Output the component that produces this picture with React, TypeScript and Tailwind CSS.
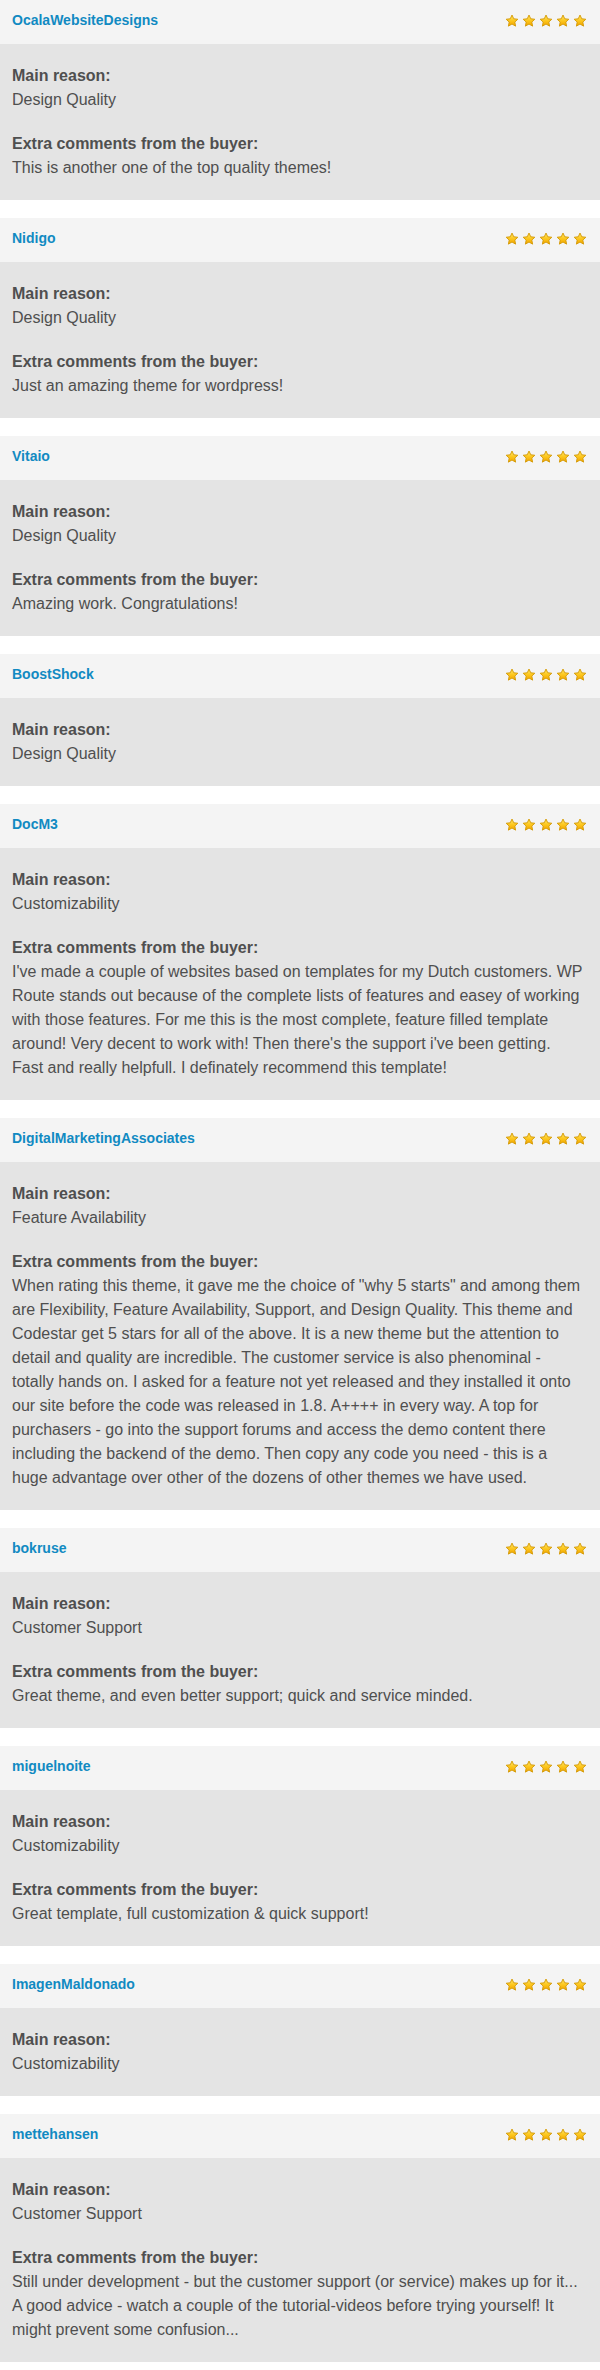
import React from "react";

type Review = { name: string; reason: string; comment?: string[] };

const reviews: Review[] = [
  { name: "OcalaWebsiteDesigns", reason: "Design Quality", comment: ["This is another one of the top quality themes!"] },
  { name: "Nidigo", reason: "Design Quality", comment: ["Just an amazing theme for wordpress!"] },
  { name: "Vitaio", reason: "Design Quality", comment: ["Amazing work. Congratulations!"] },
  { name: "BoostShock", reason: "Design Quality" },
  {
    name: "DocM3",
    reason: "Customizability",
    comment: [
      "I've made a couple of websites based on templates for my Dutch customers. WP",
      "Route stands out because of the complete lists of features and easey of working",
      "with those features. For me this is the most complete, feature filled template",
      "around! Very decent to work with! Then there's the support i've been getting.",
      "Fast and really helpfull. I definately recommend this template!",
    ],
  },
  {
    name: "DigitalMarketingAssociates",
    reason: "Feature Availability",
    comment: [
      'When rating this theme, it gave me the choice of "why 5 starts" and among them',
      "are Flexibility, Feature Availability, Support, and Design Quality. This theme and",
      "Codestar get 5 stars for all of the above. It is a new theme but the attention to",
      "detail and quality are incredible. The customer service is also phenominal -",
      "totally hands on. I asked for a feature not yet released and they installed it onto",
      "our site before the code was released in 1.8. A++++ in every way. A top for",
      "purchasers - go into the support forums and access the demo content there",
      "including the backend of the demo. Then copy any code you need - this is a",
      "huge advantage over other of the dozens of other themes we have used.",
    ],
  },
  { name: "bokruse", reason: "Customer Support", comment: ["Great theme, and even better support; quick and service minded."] },
  { name: "miguelnoite", reason: "Customizability", comment: ["Great template, full customization & quick support!"] },
  { name: "ImagenMaldonado", reason: "Customizability" },
  {
    name: "mettehansen",
    reason: "Customer Support",
    comment: [
      "Still under development - but the customer support (or service) makes up for it...",
      "A good advice - watch a couple of the tutorial-videos before trying yourself! It",
      "might prevent some confusion...",
    ],
  },
];

function Star({ id }: { id: string }) {
  return (
    <svg width="14" height="14" viewBox="0 0 24 24" className="block">
      <defs>
        <linearGradient id={id} x1="0" y1="0" x2="0" y2="1">
          <stop offset="0" stopColor="#ffe866" />
          <stop offset="0.55" stopColor="#fcc419" />
          <stop offset="1" stopColor="#f2a300" />
        </linearGradient>
      </defs>
      <path
        d="M12 1.8l3 6.4 7 .8-5.2 4.8 1.4 7-6.2-3.6-6.2 3.6 1.4-7L2 9l7-.8z"
        fill={`url(#${id})`}
        stroke="#d49a06"
        strokeWidth="1.6"
        strokeLinejoin="round"
      />
    </svg>
  );
}

function Card({ r, idx }: { r: Review; idx: number }) {
  return (
    <div className="mb-[18px]">
      <div className="h-[44px] bg-[#f4f4f4] pl-[12px] pr-[13px] pt-[12px] flex justify-between items-start">
        <span className="text-[14px] leading-4 font-bold text-[#118ac2]">{r.name}</span>
        <div className="flex gap-[3px] mt-[2px]">
          {[0, 1, 2, 3, 4].map((i) => (
            <Star key={i} id={`g${idx}_${i}`} />
          ))}
        </div>
      </div>
      <div className="bg-[#e4e4e4] px-[12px] pt-5 pb-5 text-[16px] leading-6 text-[#4f4f4f]">
        <p>
          <strong className="font-bold">Main reason:</strong>
          <br />
          {r.reason}
        </p>
        {r.comment && (
          <p className="mt-5">
            <strong className="font-bold">Extra comments from the buyer:</strong>
            {r.comment.map((line, i) => (
              <React.Fragment key={i}>
                <br />
                {line}
              </React.Fragment>
            ))}
          </p>
        )}
      </div>
    </div>
  );
}

export default function App() {
  return (
    <div className="w-[600px] bg-white" style={{ fontFamily: '"Liberation Sans", Arial, sans-serif' }}>
      {reviews.map((r, i) => (
        <Card key={r.name} r={r} idx={i} />
      ))}
    </div>
  );
}
